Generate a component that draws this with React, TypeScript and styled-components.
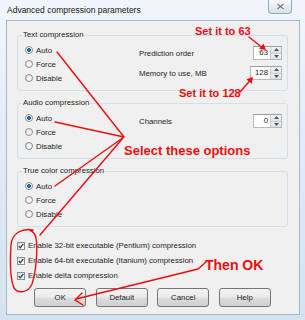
import React from 'react';
import styled, { createGlobalStyle } from 'styled-components';

const GlobalStyle = createGlobalStyle`
  html, body {
    margin: 0;
    padding: 0;
  }
  body {
    width: 305px;
    height: 320px;
    overflow: hidden;
    background: #dbe7f3;
    font-family: 'Liberation Sans', Arial, sans-serif;
  }
`;

const Stage = styled.div`
  position: relative;
  width: 305px;
  height: 320px;
`;

const Frame = styled.div`
  box-sizing: border-box;
  width: 305px;
  height: 320px;
  display: flex;
  flex-direction: column;
  padding: 0 5px 5px 6px;
  background: linear-gradient(180deg, #f1f6fc 0%, #e2ebf6 45%, #d5e2f0 100%);
`;

const TitleBar = styled.div`
  height: 20px;
  display: flex;
  justify-content: space-between;
  align-items: flex-start;
`;

const Title = styled.span`
  margin: 5px 0 0 1px;
  font-size: 8.5px;
  line-height: 10px;
  color: #151515;
`;

const CloseButton = styled.div`
  box-sizing: border-box;
  width: 24px;
  height: 14px;
  margin-right: 8px;
  display: flex;
  align-items: center;
  justify-content: center;
  border: 1px solid #97a7bc;
  border-top: none;
  border-radius: 0 0 4px 4px;
  background: linear-gradient(180deg, #f6f9fc 0%, #e6edf5 50%, #d8e2ee 100%);
`;

const Body = styled.div`
  flex: 1;
  display: flex;
  flex-direction: column;
  padding: 9px 11px 7px 10px;
  background: #f0f0f0;
  border: 1px solid #a9b6c6;
`;

const Group = styled.fieldset<{ $gap?: number }>`
  display: flex;
  margin: ${(p) => p.$gap ?? 0}px 0 0 0;
  padding: 3px 5px 5px 7px;
  min-width: 0;
  border: 1px solid #d5dfe5;
  border-radius: 3px;
`;

const Legend = styled.legend`
  margin-left: -3px;
  padding: 0 1px;
  font-size: 7.8px;
  line-height: 10px;
  color: #1e1e1e;
`;

const RadioColumn = styled.div`
  width: 114px;
  display: flex;
  flex-direction: column;
`;

const SettingsColumn = styled.div`
  flex: 1;
  display: flex;
  flex-direction: column;
  gap: 6px;
  padding-top: 3px;
`;

const OptionRow = styled.label`
  display: flex;
  align-items: center;
  gap: 3px;
  height: 14px;
  font-size: 7.8px;
  color: #1e1e1e;
`;

const Radio = styled.span<{ $checked?: boolean }>`
  box-sizing: border-box;
  width: 8px;
  height: 8px;
  border-radius: 50%;
  border: 1px solid #8d8f91;
  background: ${(p) =>
    p.$checked
      ? 'radial-gradient(circle, #2a8ad4 0%, #0b5aa8 38%, #e8e8e8 44%, #ffffff 100%)'
      : 'radial-gradient(circle at 60% 60%, #ffffff 0%, #e2e2e2 80%)'};
`;

const SettingRow = styled.div`
  display: flex;
  align-items: center;
  justify-content: space-between;
  height: 14px;
  font-size: 7.8px;
  color: #1e1e1e;
`;

const SpinBox = styled.div<{ $width: number }>`
  box-sizing: border-box;
  width: ${(p) => p.$width}px;
  height: 14px;
  display: flex;
  background: #fff;
  border: 1px solid #b5b9c0;
  border-top-color: #9a9ea6;
`;

const SpinValue = styled.span`
  flex: 1;
  padding-right: 2px;
  text-align: right;
  font-size: 7.8px;
  line-height: 12px;
  color: #1e1e1e;
`;

const SpinButtons = styled.div`
  width: 10px;
  display: flex;
  flex-direction: column;
  border-left: 1px solid #c8ccd2;
`;

const SpinHalf = styled.div`
  flex: 1;
  display: flex;
  align-items: center;
  justify-content: center;
  background: linear-gradient(180deg, #f4f4f4, #e1e1e1);
  & + & {
    border-top: 1px solid #c8ccd2;
  }
`;

const CheckList = styled.div`
  margin-top: 11px;
  display: flex;
  flex-direction: column;
`;

const CheckRow = styled.label`
  display: flex;
  align-items: center;
  gap: 3px;
  height: 15px;
  font-size: 7.8px;
  color: #1e1e1e;
`;

const CheckBox = styled.span`
  box-sizing: border-box;
  width: 8px;
  height: 8px;
  display: flex;
  align-items: center;
  justify-content: center;
  border: 1px solid #8d8f91;
  background: linear-gradient(135deg, #dcdcdc, #ffffff);
`;

const ButtonRow = styled.div`
  margin-top: 5px;
  display: flex;
  justify-content: center;
  gap: 9.5px;
`;

const Button = styled.button`
  box-sizing: border-box;
  width: 52px;
  height: 19px;
  padding: 0;
  border: 1px solid #767676;
  border-radius: 3px;
  background: linear-gradient(180deg, #f3f3f3 0%, #ebebeb 48%, #dddddd 52%, #cfcfcf 100%);
  font-family: 'Liberation Sans', Arial, sans-serif;
  font-size: 7.8px;
  color: #1e1e1e;
`;

const Overlay = styled.svg`
  position: absolute;
  left: 0;
  top: 0;
  width: 305px;
  height: 320px;
  pointer-events: none;
`;

const Note = styled.span<{ $x: number; $y: number; $size: number }>`
  position: absolute;
  left: ${(p) => p.$x}px;
  top: ${(p) => p.$y}px;
  font-family: 'Liberation Sans', Arial, sans-serif;
  font-weight: bold;
  font-size: ${(p) => p.$size}px;
  line-height: 1;
  white-space: nowrap;
  color: #f20d0d;
`;

const SpinArrow = ({ up }: { up?: boolean }) => (
  <svg width="5" height="3" viewBox="0 0 5 3">
    <path d={up ? 'M0 3 L2.5 0 L5 3 Z' : 'M0 0 L2.5 3 L5 0 Z'} fill="#4d5560" />
  </svg>
);

const Spin = ({ value, width }: { value: string; width: number }) => (
  <SpinBox $width={width}>
    <SpinValue>{value}</SpinValue>
    <SpinButtons>
      <SpinHalf>
        <SpinArrow up />
      </SpinHalf>
      <SpinHalf>
        <SpinArrow />
      </SpinHalf>
    </SpinButtons>
  </SpinBox>
);

const Radios = () => (
  <RadioColumn>
    <OptionRow>
      <Radio $checked />
      Auto
    </OptionRow>
    <OptionRow>
      <Radio />
      Force
    </OptionRow>
    <OptionRow>
      <Radio />
      Disable
    </OptionRow>
  </RadioColumn>
);

const Tick = () => (
  <svg width="6" height="6" viewBox="0 0 6 6">
    <path d="M0.7 3.1 L2.3 4.8 L5.3 0.9" fill="none" stroke="#2b3f6e" strokeWidth="1.3" />
  </svg>
);

const checks = [
  'Enable 32-bit executable (Pentium) compression',
  'Enable 64-bit executable (Itanium) compression',
  'Enable delta compression',
];

const red = '#f20d0d';

const App = () => {
  return (
    <Stage>
      <GlobalStyle />
      <Frame>
        <TitleBar>
          <Title>Advanced compression parameters</Title>
          <CloseButton>
            <svg width="9" height="7" viewBox="0 0 9 7">
              <path d="M1.5 1 L7.5 6 M7.5 1 L1.5 6" stroke="#ffffff" strokeWidth="2.6" />
              <path d="M1.5 1 L7.5 6 M7.5 1 L1.5 6" stroke="#6d7685" strokeWidth="1.3" />
            </svg>
          </CloseButton>
        </TitleBar>
        <Body>
          <Group>
            <Legend>Text compression</Legend>
            <Radios />
            <SettingsColumn>
              <SettingRow>
                Prediction order
                <Spin value="63" width={29} />
              </SettingRow>
              <SettingRow>
                Memory to use, MB
                <Spin value="128" width={32} />
              </SettingRow>
            </SettingsColumn>
          </Group>
          <Group $gap={7}>
            <Legend>Audio compression</Legend>
            <Radios />
            <SettingsColumn>
              <SettingRow>
                Channels
                <Spin value="0" width={29} />
              </SettingRow>
            </SettingsColumn>
          </Group>
          <Group $gap={7}>
            <Legend>True color compression</Legend>
            <Radios />
          </Group>
          <CheckList>
            {checks.map((c) => (
              <CheckRow key={c}>
                <CheckBox>
                  <Tick />
                </CheckBox>
                {c}
              </CheckRow>
            ))}
          </CheckList>
          <ButtonRow>
            <Button>OK</Button>
            <Button>Default</Button>
            <Button>Cancel</Button>
            <Button>Help</Button>
          </ButtonRow>
        </Body>
      </Frame>

      <Overlay viewBox="0 0 305 320">
        <g stroke={red} strokeWidth="1.4" fill="none" strokeLinecap="round">
          <path d="M249 37 L262 47.5" />
          <path d="M240 92 L250.5 80" />
          <path d="M57 52 L124 137 M55 122 L124 137 M55 186 L124 137 M123 138 L40 235" />
          <path d="M33 230 C22 228 12 233 11 245 C10 260 10 278 14 288 C18 294 28 293 32 284 C36 272 38 250 36 238 C35 233 33 231 29 230" />
          <path d="M206 262 L198 269 L76 299" />
          <path d="M82 293 L75 300 L83 305" />
        </g>
        <path d="M266 50 L259.1 48.9 L263.5 43.5 Z" fill={red} />
        <path d="M253 77 L251.7 83.8 L246.4 79.2 Z" fill={red} />
      </Overlay>
      <Note $x={195} $y={25.5} $size={11}>
        Set it to 63
      </Note>
      <Note $x={179} $y={87.5} $size={11}>
        Set it to 128
      </Note>
      <Note $x={124} $y={144} $size={13}>
        Select these options
      </Note>
      <Note $x={205} $y={258} $size={14}>
        Then OK
      </Note>
    </Stage>
  );
};

export default App;
